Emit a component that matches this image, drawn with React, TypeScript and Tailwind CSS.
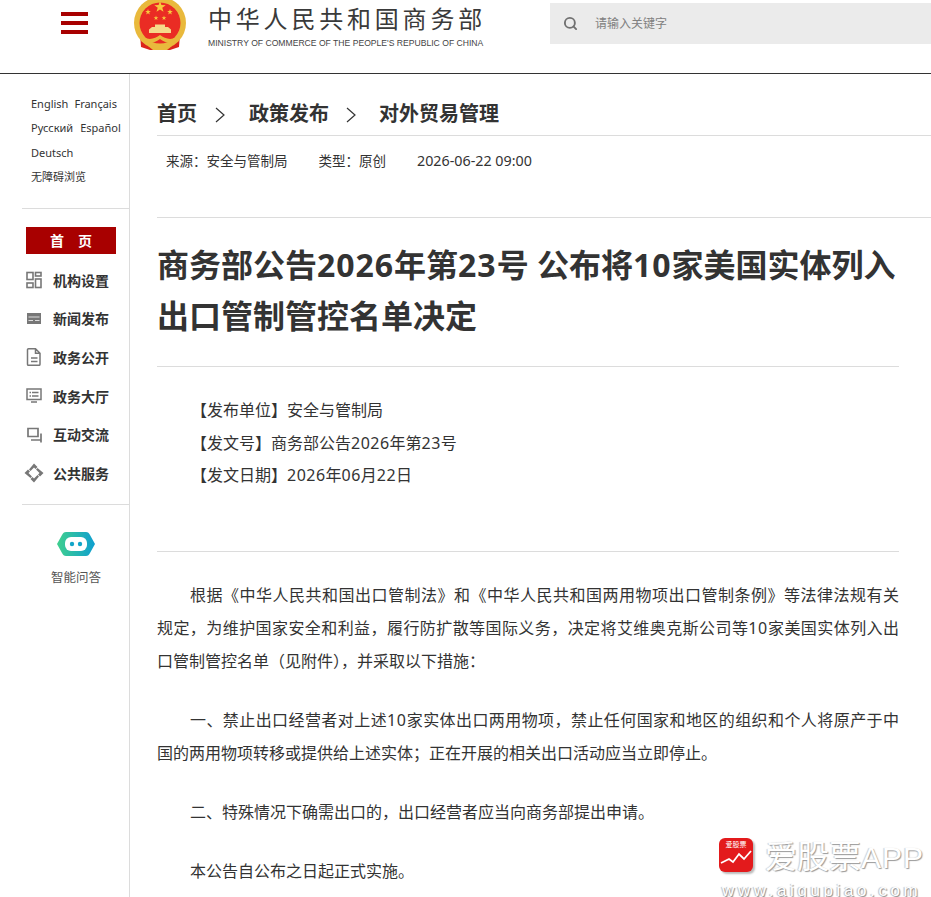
import { Search } from "lucide-react";

const FONT = "font-['Noto_Sans','Noto_Sans_CJK_SC',sans-serif]";

const navItems = [
  { label: "机构设置", icon: "grid" },
  { label: "新闻发布", icon: "news" },
  { label: "政务公开", icon: "doc" },
  { label: "政务大厅", icon: "screen" },
  { label: "互动交流", icon: "chat" },
  { label: "公共服务", icon: "service" },
];

function NavIcon({ name }: { name: string }) {
  const common = { width: 16, height: 18, viewBox: "0 0 16 18", fill: "none", stroke: "#777", strokeWidth: 1.6 };
  if (name === "grid")
    return (
      <svg {...common}>
        <rect x="1" y="1.500" width="6" height="7" />
        <rect x="9.500" y="1.500" width="5.500" height="3.500" />
        <rect x="9.500" y="8" width="5.500" height="8.500" />
        <rect x="1" y="12" width="6" height="4.500" />
      </svg>
    );
  if (name === "news")
    return (
      <svg {...common}>
        <rect x="1" y="3" width="14" height="11" fill="#777" stroke="none" />
        <path d="M2.500 7h11M2.500 10.500h4.500M9 10.500h4.500" stroke="#ddd" strokeWidth="1.200" />
      </svg>
    );
  if (name === "doc")
    return (
      <svg {...common}>
        <path d="M2.500 0.800h7l4.500 4.500v11a1 1 0 0 1-1 1h-10.500a1 1 0 0 1-1-1v-14.500a1 1 0 0 1 1-1zM9.500 0.800v4.500h4.500M5 10h6.500M5 13.500h6.500" strokeWidth="1.500" />
      </svg>
    );
  if (name === "screen")
    return (
      <svg {...common}>
        <rect x="1" y="2" width="14" height="10.500" strokeWidth="1.500" />
        <path d="M3.500 5.500h1.500M6 5.500h6.500M3.500 9h1.500M6 9h6.500M5 15h6" strokeWidth="1.300" />
      </svg>
    );
  if (name === "chat")
    return (
      <svg {...common}>
        <path d="M2 2.500h10v8h-10zM15 7.500v9M5 14h10" strokeWidth="1.700" />
      </svg>
    );
  return (
    <svg width="20" height="20" viewBox="0 0 20 20" className="-mx-[2px]">
      <path d="M10 0.500l3.500 3.500-2 2-1.500-1.500-3.500 3.500-1.500-1.500zM19.500 10l-3.500 3.500-2-2 1.500-1.500-3.500-3.500 1.500-1.500zM10 19.500l-3.500-3.500 2-2 1.500 1.500 3.500-3.500 1.500 1.500zM0.500 10l3.500-3.500 2 2-1.500 1.500 3.500 3.500-1.500 1.500z" fill="#777" />
    </svg>
  );
}

function Star({ x, y, r }: { x: number; y: number; r: number }) {
  const points = Array.from({ length: 10 }, (_, i) => {
    const a = -Math.PI / 2 + (i * Math.PI) / 5;
    const d = i % 2 === 0 ? r : r * 0.4;
    return `${x + d * Math.cos(a)},${y + d * Math.sin(a)}`;
  }).join(" ");
  return <polygon points={points} fill="#f8c93e" />;
}

function Emblem() {
  return (
    <svg width="54" height="54" viewBox="0 0 54 54">
      <path d="M7 36h40l-1 13-9 3H17l-9-3z" fill="#dc241c" />
      <circle cx="27" cy="25" r="26" fill="#e9b93c" />
      <circle cx="27" cy="25" r="20.500" fill="#ea2c24" />
      <Star x={27} y={9} r={6} />
      <Star x={15} y={14} r={3} />
      <Star x={37} y={14} r={3} />
      <Star x={23} y={20} r={2.500} />
      <Star x={31} y={20} r={2.500} />
      <path d="M19 29h16l3 2.500v3.500H16v-3.500zM22 26.500h10v2.500H22z" fill="#f5d98a" />
      <path d="M6 35c6 8 15 7 21 2 6 5 15 6 21-2l-5 9c-7 2-12 0-16-3-4 3-9 5-16 3z" fill="#e9b93c" />
      <path d="M15 48h24l-5 4H20z" fill="#e9b93c" />
    </svg>
  );
}

function Chevron({ className }: { className: string }) {
  return (
    <svg className={className} width="10" height="16" viewBox="0 0 10 16" fill="none" stroke="#333" strokeWidth="1.200">
      <path d="M1 1l8 7-8 7" />
    </svg>
  );
}

// digits in the reference run a little wider than this font's
function Num({ children }: { children: string }) {
  return <span className="tracking-[0.03em]">{children}</span>;
}

// a line filled out to the full column, as on the source page
function Full({ children }: { children: React.ReactNode }) {
  return <span className="block text-justify [text-align-last:justify]">{children}</span>;
}

export default function App() {
  return (
    <div className={`relative h-[897px] w-[931px] overflow-hidden bg-white ${FONT}`}>
      {/* top bar */}
      <header className="flex h-[74px] border-b border-[#333]">
        <div className="w-[133px] shrink-0 pl-[61px] pt-3">
          <div className="flex h-[22px] w-[27px] flex-col justify-between">
            <span className="h-1 bg-[#a80000]" />
            <span className="h-1 bg-[#a80000]" />
            <span className="h-1 bg-[#a80000]" />
          </div>
        </div>
        <div className="-mt-[2px] h-[54px] w-[54px] shrink-0">
          <Emblem />
        </div>
        <div className="ml-[21px] w-[342px] shrink-0 pt-[3px]">
          <div className="whitespace-nowrap text-[24px] leading-[32px] tracking-[3.800px] text-[#3a3a3a]">中华人民共和国商务部</div>
          <div className="mt-[2px] whitespace-nowrap font-['Liberation_Sans',sans-serif] text-[8.600px] leading-3 text-[#444]">
            MINISTRY OF COMMERCE OF THE PEOPLE'S REPUBLIC OF CHINA
          </div>
        </div>
        <div className="mt-[3px] flex h-[41px] flex-1 items-center bg-[#ebebeb] pl-[13px]">
          <Search size={15} strokeWidth={3} className="text-[#707070]" />
          <span className="ml-[17px] text-xs text-[#808080]">请输入关键字</span>
        </div>
      </header>

      <div className="flex">
        {/* left rail */}
        <aside className="h-[823px] w-[130px] shrink-0 border-r border-[#dcdcdc] pl-[22px]">
          <div className="h-[135px] border-b border-[#dcdcdc] pl-[9px] pt-[18px] text-[11px] leading-[24.300px] text-[#333]">
            <div className="flex gap-[6px]">
              <span>English</span>
              <span>Français</span>
            </div>
            <div className="flex gap-[7px]">
              <span>Русский</span>
              <span>Español</span>
            </div>
            <div>Deutsch</div>
            <div>无障碍浏览</div>
          </div>
          <div className="border-b border-[#dcdcdc] pb-[11px] pt-[18px]">
            <div className="ml-1 flex h-[27px] w-[90px] items-center justify-center gap-[14px] bg-[#a80000] text-[14px] font-bold text-white">
              <span>首</span>
              <span>页</span>
            </div>
            <nav className="mt-[7px] pl-1">
              {navItems.map((item) => (
                <div key={item.label} className="flex h-[38.600px] items-center">
                  <NavIcon name={item.icon} />
                  <span className="ml-[11px] text-[14px] font-bold text-[#333]">{item.label}</span>
                </div>
              ))}
            </nav>
          </div>
          <div className="flex w-[107px] flex-col items-center pl-[1px] pt-[26px]">
            <svg width="40" height="26" viewBox="0 0 40 26">
              <defs>
                <linearGradient id="bot" x1="0" x2="1">
                  <stop offset="0" stopColor="#3fcf8e" />
                  <stop offset="1" stopColor="#0f9fd0" />
                </linearGradient>
              </defs>
              <path d="M10 1h20c2 0 3 1 4 3l5 9-5 9c-1 2-2 3-4 3H10c-2 0-3-1-4-3l-5-9 5-9c1-2 2-3 4-3z" fill="url(#bot)" />
              <rect x="9" y="6" width="22" height="14" rx="6" fill="#fff" />
              <circle cx="16" cy="13" r="2.200" fill="#12a5c9" />
              <circle cx="24" cy="13" r="2.200" fill="#12a5c9" />
            </svg>
            <span className="mt-[13px] text-[12.500px] leading-4 text-[#555]">智能问答</span>
          </div>
        </aside>

        {/* article */}
        <main className="min-w-0 flex-1 pl-[27px]">
          <div className="flex h-[62px] items-end border-b border-[#dcdcdc] pb-[6px] text-[20px] font-bold leading-[30px] text-[#333]">
            <span>首页</span>
            <Chevron className="mx-[18px] mb-[6px]" />
            <span className="ml-[6px]">政策发布</span>
            <Chevron className="mx-[17px] mb-[6px]" />
            <span className="ml-[6px]">对外贸易管理</span>
          </div>
          <div className="flex h-[82px] border-b border-[#dcdcdc] pl-[9px] pt-[15px] text-[13.500px] leading-5 text-[#333]">
            <span>来源：安全与管制局</span>
            <span className="ml-[31px]">类型：原创</span>
            <span className="ml-[31px] text-[14.300px]">2026-06-22 09:00</span>
          </div>
          <h1 className="mt-[21px] w-[742px] text-[32px] font-bold leading-[51px] text-[#333]">
            商务部公告<Num>2026</Num>年第<Num>23</Num>号 公布将<Num>10</Num>家美国实体列入出口管制管控名单决定
          </h1>
          <div className="mt-[25px] w-[742px] border-t border-[#dcdcdc] pt-[27px] text-[16px] leading-[32.700px] text-[#333]">
            <p className="pl-[34px]">【发布单位】安全与管制局</p>
            <p className="pl-[34px]">【发文号】商务部公告<Num>2026</Num>年第<Num>23</Num>号</p>
            <p className="pl-[34px]">【发文日期】<Num>2026</Num>年<Num>06</Num>月<Num>22</Num>日</p>
          </div>
          <div className="mt-[59px] w-[742px] border-t border-[#dcdcdc] pt-[27px] text-[16px] leading-[33px] text-[#333]">
            <p>
              <span className="block pl-[33px] text-justify [text-align-last:justify]">
                根据《中华人民共和国出口管制法》和《中华人民共和国两用物项出口管制条例》等法律法规有关
              </span>
              <Full>
                规定，为维护国家安全和利益，履行防扩散等国际义务，决定将艾维奥克斯公司等<Num>10</Num>家美国实体列入出
              </Full>
              <span className="block">口管制管控名单（见附件），并采取以下措施：</span>
            </p>
            <p className="mt-[26px]">
              <span className="block pl-[33px] text-justify [text-align-last:justify]">
                一、禁止出口经营者对上述<Num>10</Num>家实体出口两用物项，禁止任何国家和地区的组织和个人将原产于中
              </span>
              <span className="block">国的两用物项转移或提供给上述实体；正在开展的相关出口活动应当立即停止。</span>
            </p>
            <p className="mt-[26px] pl-[33px]">二、特殊情况下确需出口的，出口经营者应当向商务部提出申请。</p>
            <p className="mt-[26px] pl-[33px]">本公告自公布之日起正式实施。</p>
          </div>
        </main>
      </div>

      {/* site watermark */}
      <div className="absolute left-[719px] top-[838px] w-[210px]">
        <div className="flex">
          <div className="flex h-[34px] w-[34px] flex-col items-center rounded-md bg-[#e31a1c] pt-[2px] shadow-[2px_2px_2px_#bbb]">
            <span className="text-[7px] leading-[9px] text-white">爱股票</span>
            <svg width="32" height="18" viewBox="0 0 32 18" fill="none" stroke="#fff" strokeWidth="1.800">
              <path d="M1 14l8-4 4 3 6-8 5 5 7-8" />
            </svg>
          </div>
          <span className="ml-[12px] whitespace-nowrap text-[32px] leading-9 text-white [text-shadow:1px_1px_1px_#999,-1px_0_1px_#ccc]">
            爱股票
            <span className="font-['Liberation_Sans',sans-serif] text-[30px] tracking-[1px]">APP</span>
          </span>
        </div>
        <div className="ml-[3px] mt-[6px] whitespace-nowrap font-['Liberation_Sans',sans-serif] text-[17px] leading-[17px] tracking-[3.600px] text-white [text-shadow:1px_1px_1px_#888,-1px_0_1px_#bbb]">
          www.aigupiao.com
        </div>
      </div>
    </div>
  );
}
